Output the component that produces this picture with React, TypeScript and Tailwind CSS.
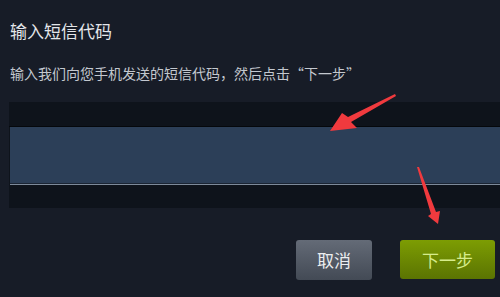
import React from "react";

export default function App() {
  return (
    <div
      className="relative w-[500px] h-[297px] overflow-hidden bg-[#171c27]"
      style={{ fontFamily: '"Noto Sans CJK SC", "Noto Sans", sans-serif' }}
    >
      <div className="pt-[20px] pl-[10px] text-[17px] leading-[22px] text-[#e4e6ea]">输入短信代码</div>
      <div className="mt-[21px] pl-[10px] text-[14px] leading-[20px] text-[#c3c8cf]">
        输入我们向您手机发送的短信代码，然后点击“下一步”
      </div>

      {/* code field */}
      <div className="mt-[19px] ml-[9px] h-[106px] bg-[#0e131b] flex flex-col">
        <div className="h-[24px]" />
        <div className="h-[1px] bg-[#05080c]" />
        <div className="ml-[1px] h-[56px] bg-[#2c3f58]" />
        <div className="ml-[1px] h-[1px] bg-[#1a2433]" />
        <div className="ml-[1px] h-[1px] bg-[#7d8a9a]" />
      </div>

      {/* buttons */}
      <div className="mt-[32px] flex justify-end gap-[28px] pr-[5px]">
        <button className="w-[76px] h-[40px] rounded-[3px] bg-gradient-to-b from-[#646b77] to-[#434a55] text-[17px] text-[#eceef0]">
          取消
        </button>
        <button className="w-[95px] h-[39px] rounded-[3px] bg-gradient-to-b from-[#7d9d03] to-[#5b7402] text-[17px] text-[#d6ec8c]">
          下一步
        </button>
      </div>

      {/* red annotation arrows */}
      <svg className="absolute left-0 top-0 pointer-events-none" width="500" height="297">
        <polygon points="395,94 348,117 342,113 330,131 357,128 351,122 396,96" fill="#f03a3e" />
        <polygon points="417,167 431,214 428,216 438,224 440,211 436,212 419,167" fill="#f03a3e" />
      </svg>
    </div>
  );
}
